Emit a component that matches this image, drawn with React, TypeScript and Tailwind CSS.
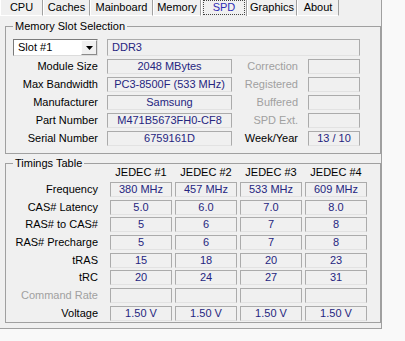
import React from "react";

const tabs = [
  { name: "CPU", w: "w-[43px]" },
  { name: "Caches", w: "w-[47px]" },
  { name: "Mainboard", w: "w-[63px]" },
  { name: "Memory", w: "w-[48px]" },
  { name: "SPD", w: "w-[46px]", active: true },
  { name: "Graphics", w: "w-[50px]" },
  { name: "About", w: "w-[42px]" },
];

const slotRows = [
  { label: "Module Size", value: "2048 MBytes", right: "Correction", rv: "", dim: true },
  { label: "Max Bandwidth", value: "PC3-8500F (533 MHz)", right: "Registered", rv: "", dim: true },
  { label: "Manufacturer", value: "Samsung", right: "Buffered", rv: "", dim: true },
  { label: "Part Number", value: "M471B5673FH0-CF8", right: "SPD Ext.", rv: "", dim: true },
  { label: "Serial Number", value: "6759161D", right: "Week/Year", rv: "13 / 10", dim: false },
];

const timings = [
  { label: "Frequency", vals: ["380 MHz", "457 MHz", "533 MHz", "609 MHz"] },
  { label: "CAS# Latency", vals: ["5.0", "6.0", "7.0", "8.0"] },
  { label: "RAS# to CAS#", vals: ["5", "6", "7", "8"] },
  { label: "RAS# Precharge", vals: ["5", "6", "7", "8"] },
  { label: "tRAS", vals: ["15", "18", "20", "23"] },
  { label: "tRC", vals: ["20", "24", "27", "31"] },
  { label: "Command Rate", vals: ["", "", "", ""], dim: true },
  { label: "Voltage", vals: ["1.50 V", "1.50 V", "1.50 V", "1.50 V"] },
];

function Box({ children, className = "" }: { children?: React.ReactNode; className?: string }) {
  return (
    <div
      className={`h-[15px] border border-[#ababab] border-b-[#e2e2e2] text-center leading-[13px] text-[#25257f] whitespace-nowrap overflow-hidden ${className}`}
    >
      {children}
    </div>
  );
}

function Tab({ name, w, active }: { name: string; w: string; active?: boolean }) {
  if (active) {
    return (
      <div className={`${w} h-[16px] flex border-l border-l-white border-r border-r-[#a0a0a0] px-[1px]`}>
        <span className="flex-1 h-[15px] border border-dotted border-[#444] text-center leading-[13px] text-[#2d2db4]">
          {name}
        </span>
      </div>
    );
  }
  return (
    <div
      className={`${w} h-[16px] border-l border-l-white border-r border-r-[#a0a0a0] border-b border-b-white text-center leading-[15px]`}
    >
      {name}
    </div>
  );
}

export default function App() {
  return (
    <div className="w-[405px] h-[341px] bg-[#f9f9f9] font-['Liberation_Sans',Arial,sans-serif] text-[11px] text-black">
      <div className="w-[382px] h-[329px] bg-[#f0f0f0] border-r border-b border-[#a0a0a0] flex flex-col">
        <div className="flex h-[16px]">
          {tabs.map((t) => (
            <Tab key={t.name} {...t} />
          ))}
        </div>

        <div className="flex-1 flex flex-col pl-[5px] pt-[4px]">
          <fieldset className="w-[376px] border border-[#a0a0a0] pl-[7px] pt-[7px] pb-[7px]">
            <legend className="px-[2px] leading-[12px]">Memory Slot Selection</legend>
            <div className="flex gap-[9px] mb-[3px]">
              <div className="w-[85px] h-[17px] bg-white border border-[#7a7a7a] border-r-[#dcdcdc] border-b-[#dcdcdc] flex">
                <span className="flex-1 pl-[4px] leading-[15px]">Slot #1</span>
                <div className="w-[16px] h-[15px] bg-[#f0f0f0] border border-[#fdfdfd] border-r-[#8a8a8a] border-b-[#8a8a8a] flex items-center justify-center">
                  <svg width="7" height="4" viewBox="0 0 7 4">
                    <path d="M0 0H7L3.5 4Z" fill="#000" />
                  </svg>
                </div>
              </div>
              <div className="w-[253px] h-[17px] border border-[#ababab] border-b-[#e2e2e2] pl-[4px] leading-[15px] text-[#25257f]">
                DDR3
              </div>
            </div>
            <div className="grid grid-cols-[94px_125px_76px_52px] gap-y-[3px]">
              {slotRows.map((r) => (
                <React.Fragment key={r.label}>
                  <div className="pr-[9px] text-right leading-[15px]">{r.label}</div>
                  <Box>{r.value}</Box>
                  <div className={`pr-[10px] text-right leading-[15px] ${r.dim ? "text-[#a0a0a0]" : ""}`}>
                    {r.right}
                  </div>
                  <Box>{r.rv}</Box>
                </React.Fragment>
              ))}
            </div>
          </fieldset>

          <fieldset className="w-[376px] mt-[3px] border border-[#a0a0a0] pl-[7px] pb-[1px]">
            <legend className="px-[2px] leading-[12px]">Timings Table</legend>
            <div className="grid grid-cols-[94px_62px_62px_62px_62px] gap-x-[3px] gap-y-[2.7px]">
              <div className="h-[10.3px]" />
              {["JEDEC #1", "JEDEC #2", "JEDEC #3", "JEDEC #4"].map((h) => (
                <div key={h} className="h-[10.3px] text-center leading-[7px] whitespace-nowrap">
                  {h}
                </div>
              ))}
              {timings.map((r) => (
                <React.Fragment key={r.label}>
                  <div className={`pr-[9px] text-right leading-[15px] whitespace-nowrap ${r.dim ? "text-[#a0a0a0]" : ""}`}>
                    {r.label}
                  </div>
                  {r.vals.map((v, i) => (
                    <Box key={i}>{v}</Box>
                  ))}
                </React.Fragment>
              ))}
            </div>
          </fieldset>
        </div>
      </div>
    </div>
  );
}
